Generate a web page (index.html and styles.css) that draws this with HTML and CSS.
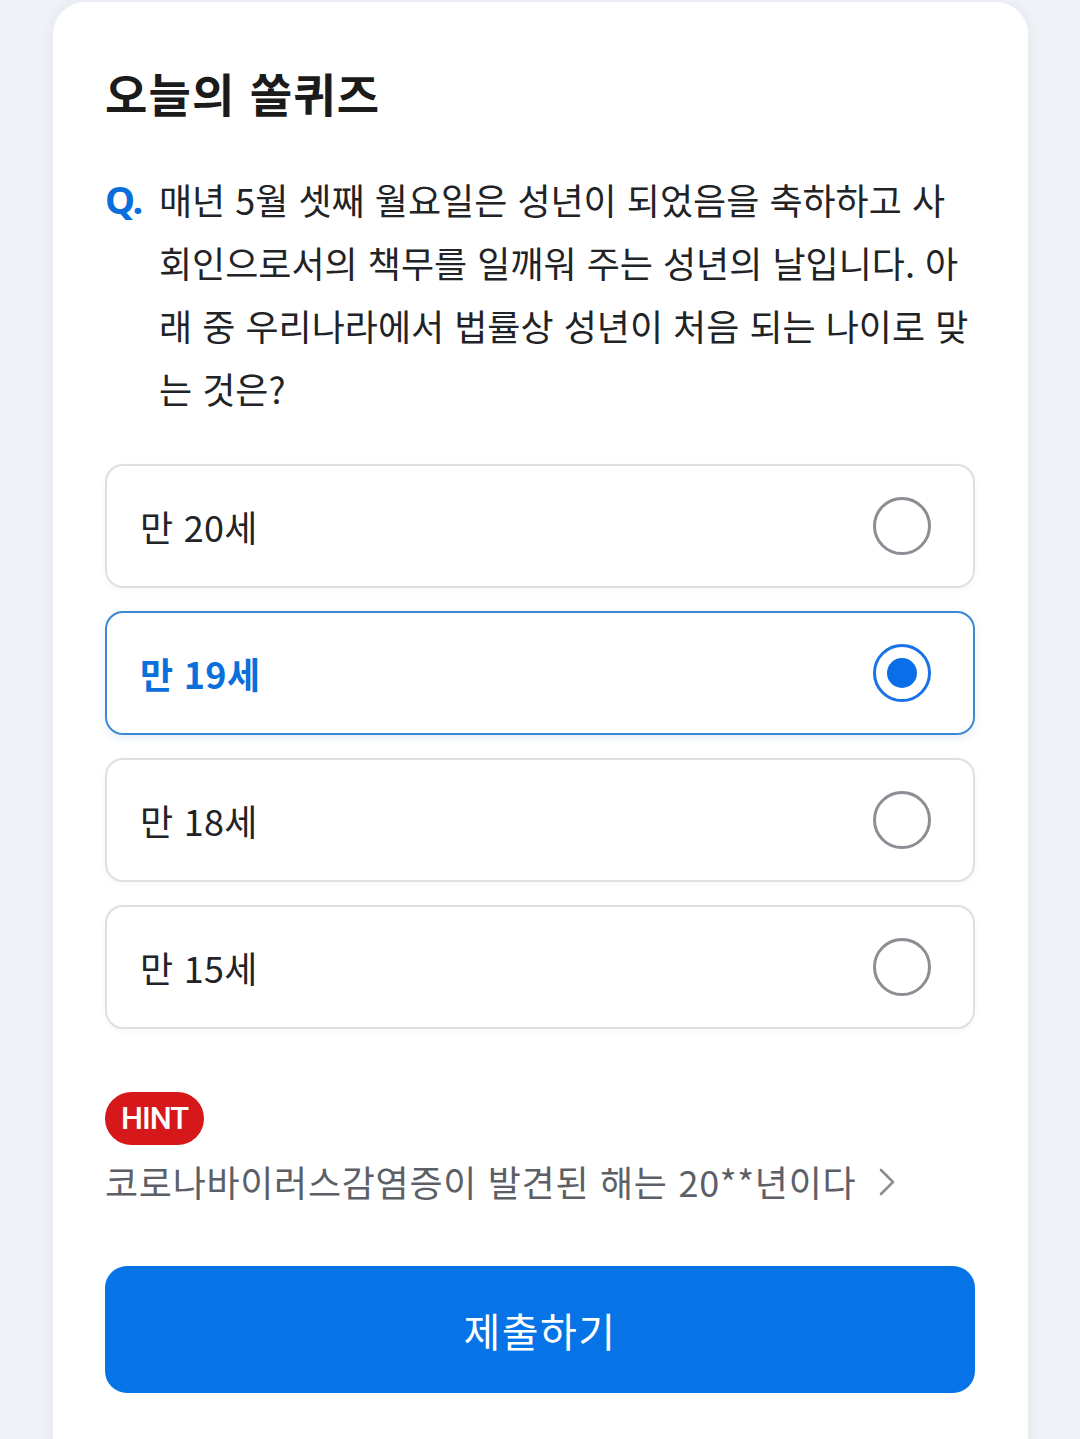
FILE: index.html
```html
<!DOCTYPE html>
<html lang="ko">
<head>
<meta charset="utf-8">
<title>오늘의 쏠퀴즈</title>
<link rel="stylesheet" href="styles.css">
</head>
<body>
<main class="card">
  <h1 class="title">오늘의 쏠퀴즈</h1>
  <div class="question">
    <span class="q-mark">Q.</span>
    <p class="q-text">매년 5월 셋째 월요일은 성년이 되었음을 축하하고 사<br>회인으로서의 책무를 일깨워 주는 성년의 날입니다. 아<br>래 중 우리나라에서 법률상 성년이 처음 되는 나이로 맞<br>는 것은?</p>
  </div>
  <ul class="options">
    <li class="option"><span class="option-label">만 20세</span><span class="radio"></span></li>
    <li class="option selected"><span class="option-label">만 19세</span><span class="radio"></span></li>
    <li class="option"><span class="option-label">만 18세</span><span class="radio"></span></li>
    <li class="option"><span class="option-label">만 15세</span><span class="radio"></span></li>
  </ul>
  <div class="hint">
    <span class="hint-badge">HINT</span>
    <div class="hint-row">
      <span class="hint-text">코로나바이러스감염증이 발견된 해는 20**년이다</span>
      <svg class="chevron" width="18" height="30" viewBox="0 0 18 30"><polyline points="3,3 15,15 3,27" fill="none" stroke="#8a8d92" stroke-width="2.6" stroke-linecap="round" stroke-linejoin="round"/></svg>
    </div>
  </div>
  <button class="submit">제출하기</button>
</main>
</body>
</html>
```

FILE: styles.css
```css
* { box-sizing: border-box; }
html, body {
  margin: 0;
  padding: 0;
  background: #eff2f7;
  font-family: "Noto Sans CJK KR", "Noto Sans", sans-serif;
}
body {
  width: 1080px;
  height: 1439px;
  overflow: hidden;
}
.card {
  margin: 2px 0 0 53px;
  width: 975px;
  min-height: 1480px;
  background: #ffffff;
  border-radius: 32px;
  box-shadow: 0 0 14px rgba(170, 180, 200, 0.18);
  padding: 60px 53px 0 52px;
}
.title {
  margin: 0;
  font-size: 46px;
  line-height: 60px;
  font-weight: 700;
  color: #1b1b1b;
  letter-spacing: 1.2px;
}
.question {
  display: flex;
  margin-top: 46px;
}
.q-mark {
  flex: 0 0 54px;
  font-family: "Noto Sans", "Roboto", sans-serif;
  font-weight: 700;
  font-size: 38px;
  line-height: 63px;
  color: #0b6fdb;
  letter-spacing: -1px;
}
.q-text {
  margin: 0;
  font-size: 36px;
  line-height: 63px;
  color: #222326;
  letter-spacing: 0;
  white-space: nowrap;
}
.options {
  list-style: none;
  margin: 44px 0 0;
  padding: 0;
  display: flex;
  flex-direction: column;
  gap: 23px;
}
.option {
  height: 124px;
  border: 2px solid #dcdfe3;
  border-radius: 18px;
  display: flex;
  align-items: center;
  justify-content: space-between;
  padding: 0 42px 0 33px;
  box-shadow: 0 2px 6px rgba(0, 0, 0, 0.04);
}
.option-label {
  font-size: 36px;
  color: #222326;
  letter-spacing: 0.3px;
}
.radio {
  width: 58px;
  height: 58px;
  border-radius: 50%;
  border: 3px solid #8b8e93;
  display: flex;
  align-items: center;
  justify-content: center;
}
.option.selected {
  border-color: #3c88d4;
  box-shadow: 0 3px 8px rgba(40, 100, 180, 0.12);
}
.option.selected .option-label {
  color: #0b6fdb;
  font-weight: 700;
}
.option.selected .radio {
  border-color: #1a73e6;
}
.option.selected .radio::after {
  content: "";
  width: 30px;
  height: 30px;
  border-radius: 50%;
  background: #0a6ee8;
}
.hint {
  margin-top: 63px;
  display: flex;
  flex-direction: column;
  align-items: flex-start;
}
.hint-badge {
  height: 53px;
  padding: 0 16px;
  border-radius: 27px;
  background: #d6181b;
  color: #ffffff;
  font-family: "Roboto", "Noto Sans", sans-serif;
  font-weight: 500;
  font-size: 31px;
  letter-spacing: -1px;
  display: flex;
  align-items: center;
}
.hint-row {
  margin-top: 11px;
  display: flex;
  align-items: center;
  gap: 22px;
}
.hint-text {
  font-size: 36px;
  line-height: 50px;
  color: #5c6066;
  letter-spacing: 0.7px;
}
.chevron {
  display: block;
  margin-top: 2px;
}
.submit {
  display: block;
  margin-top: 60px;
  width: 870px;
  height: 127px;
  border: none;
  border-radius: 22px;
  background: #0673e6;
  color: #ffffff;
  font-family: "Noto Sans CJK KR", sans-serif;
  font-size: 40px;
  letter-spacing: 1.5px;
}
```
